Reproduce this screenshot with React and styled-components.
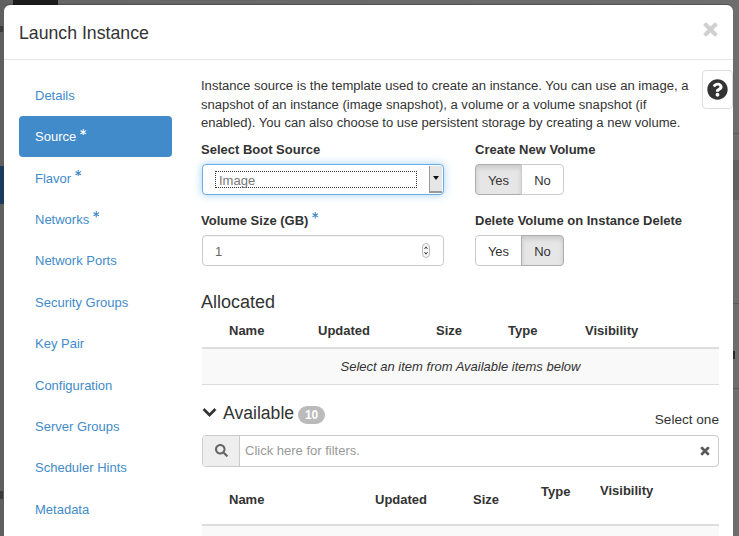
import React from "react";
import styled, { createGlobalStyle } from "styled-components";
import { FaTimes, FaQuestionCircle, FaSearch, FaChevronDown, FaAsterisk } from "react-icons/fa";

const Global = createGlobalStyle`
  html, body { margin: 0; padding: 0; background: #666; }
  * { box-sizing: border-box; }
  #root { height: 536px; overflow: hidden; }
`;

const Backdrop = styled.div`
  position: relative;
  height: 536px;
  overflow: hidden;
  padding: 5px 6px 0 4px;
  background: linear-gradient(90deg, #5f5f5f 0, #666 20px, #6e6e6e 100%);
  font-family: "Liberation Sans", Arial, sans-serif;
  font-size: 13px;
  color: #333;
`;

const BackBlock = styled.div`
  position: absolute;
  left: ${p => p.$x}px;
  top: ${p => p.$y}px;
  width: ${p => p.$w}px;
  height: ${p => p.$h}px;
  background: ${p => p.$c};
`;

const Modal = styled.div`
  position: relative;
  height: 560px;
  background: #fff;
  border-radius: 6px 6px 0 0;
  box-shadow: 0 -1px 1px rgba(0, 0, 0, .25);
`;

const Header = styled.header`
  height: 55px;
  padding: 0 15px;
  display: flex;
  align-items: center;
  justify-content: space-between;
  border-bottom: 1px solid #e5e5e5;
`;

const Title = styled.h4`
  margin: 2px 0 0;
  font-size: 17.7px;
  font-weight: 400;
  color: #333;
`;

const Close = styled.span`
  display: flex;
  margin: 0 -2px 6px 0;
  color: #cfcfcf;
  font-size: 19px;
  & svg { stroke: #cfcfcf; stroke-width: 24px; }
`;

const Body = styled.div`
  display: grid;
  grid-template-columns: 153px 518px;
  column-gap: 29px;
  padding-left: 15px;
`;

const Nav = styled.nav`
  display: flex;
  flex-direction: column;
  gap: 0.38px;
  padding-top: 14.9px;
`;

const NavItem = styled.div`
  height: 41px;
  padding: 0 16px;
  display: flex;
  align-items: center;
  border-radius: 4px;
  color: ${p => (p.$active ? "#fff" : "#428bca")};
  background: ${p => (p.$active ? "#428bca" : "transparent")};
`;

const Star = styled.span`
  display: inline-flex;
  margin: -10px 0 0 4px;
  font-size: 6.5px;
  color: ${p => (p.$light ? "#fff" : "#428bca")};
`;

const Content = styled.main`
  padding-top: 17px;
`;

const Intro = styled.p`
  margin: 0;
  line-height: 18.5px;
  color: #333;
  font-size: 13.05px;
`;

const FormGrid = styled.div`
  display: grid;
  grid-template-columns: 244px 244px;
  column-gap: 30px;
  margin-top: 8px;
`;

const Field = styled.div`
  height: 71px;
`;

const Label = styled.label`
  display: flex;
  align-items: center;
  height: 18px;
  margin: 0 0 5px;
  font-weight: 700;
  color: #333;
  font-size: 13px;
`;

const SelectBox = styled.div`
  display: flex;
  height: 31px;
  width: 242px;
  margin-left: 1px;
  padding: 1px;
  border: 1px solid #66afe9;
  border-radius: 4px;
  box-shadow: 0 0 8px rgba(102, 175, 233, .6);
  background: #fff;
`;

const SelectText = styled.div`
  flex: 1;
  margin: 5px 12px 5px 11px;
  padding: 2px 0 0 3px;
  border: 1px dotted #333;
  display: flex;
  align-items: center;
  color: #777;
  font-size: 13px;
  line-height: 1;
`;

const SelectArrow = styled.div`
  width: 13px;
  display: flex;
  align-items: center;
  justify-content: center;
  background: #e6e6e6;
  border-left: 1px solid #999;
  border-bottom: 2px solid #999;
  &::after {
    content: "";
    border-left: 3px solid transparent;
    border-right: 3px solid transparent;
    border-top: 4px solid #111;
  }
`;

const NumberBox = styled.div`
  display: flex;
  align-items: center;
  justify-content: space-between;
  height: 31px;
  width: 242px;
  margin-left: 1px;
  padding: 2px 14px 0 12px;
  border: 1px solid #ccc;
  border-radius: 4px;
  color: #666;
  box-shadow: inset 0 1px 1px rgba(0, 0, 0, .05);
`;

const Toggle = styled.div`
  display: inline-flex;
  height: 31px;
`;

const ToggleBtn = styled.div`
  width: ${p => p.$w}px;
  display: flex;
  align-items: center;
  justify-content: center;
  padding-top: 2px;
  border: 1px solid #ccc;
  color: #333;
  background: ${p => (p.$on ? "#e6e6e6" : "#fff")};
  border-color: ${p => (p.$on ? "#adadad" : "#ccc")};
  box-shadow: ${p => (p.$on ? "inset 0 3px 5px rgba(0,0,0,.125)" : "none")};
  &:first-child { border-radius: 4px 0 0 4px; }
  &:last-child { border-radius: 0 4px 4px 0; margin-left: -1px; }
`;

const SectionTitle = styled.h4`
  margin: 0;
  font-size: 17.6px;
  font-weight: 400;
  line-height: 20px;
  color: #333;
`;

const AllocatedTitle = styled(SectionTitle)`
  margin-top: 9px;
  font-size: 18px;
`;

const HeadRow = styled.div`
  display: grid;
  grid-template-columns: ${p => p.$cols};
  height: ${p => p.$h}px;
  margin-left: 1px;
  padding-left: 27px;
  border-bottom: 2px solid #ddd;
  font-weight: 700;
  color: #333;
`;

const HeadCell = styled.div`
  padding-top: ${p => p.$top}px;
  line-height: 16px;
  font-size: 13px;
`;

const EmptyRow = styled.div`
  height: 36px;
  margin-left: 1px;
  display: flex;
  align-items: center;
  justify-content: center;
  background: #f9f9f9;
  border-bottom: 1px solid #ddd;
  font-style: italic;
  color: #333;
  font-size: 13px;
`;

const AvailableBar = styled.div`
  display: flex;
  align-items: flex-start;
  justify-content: space-between;
  height: 32px;
  margin-top: 18px;
`;

const AvailableHead = styled.div`
  display: flex;
  align-items: center;
  height: 20px;
  padding-left: 1px;
`;

const Chevron = styled.span`
  display: inline-flex;
  margin-right: 6px;
  font-size: 15px;
  color: #333;
  & svg { stroke: #333; stroke-width: 20px; }
`;

const Badge = styled.span`
  margin: 4px 0 0 4px;
  width: 27px;
  height: 18px;
  border-radius: 9px;
  background: #bbb;
  color: #fff;
  font-size: 12px;
  font-weight: 700;
  display: flex;
  align-items: center;
  justify-content: center;
`;

const SelectOne = styled.span`
  margin-top: 9px;
  line-height: 16px;
  font-size: 13.6px;
`;

const Search = styled.div`
  display: flex;
  height: 32px;
  margin-left: 1px;
  border: 1px solid #ccc;
  border-radius: 4px;
  overflow: hidden;
`;

const SearchAddon = styled.div`
  width: 37px;
  display: flex;
  align-items: center;
  justify-content: center;
  background: #eee;
  border-right: 1px solid #ccc;
  color: #666;
  font-size: 13px;
`;

const SearchText = styled.div`
  flex: 1;
  display: flex;
  align-items: center;
  justify-content: space-between;
  padding: 0 7px 0 5px;
  color: #999;
`;

const ClearIcon = styled.span`
  display: flex;
  color: #555;
  font-size: 12px;
  & svg { stroke: #555; stroke-width: 24px; }
`;

const RestRow = styled.div`
  height: 30px;
  margin-left: 1px;
  background: #f9f9f9;
`;

const HelpBtn = styled.div`
  position: absolute;
  top: 65px;
  right: 0;
  width: 31px;
  height: 39px;
  display: flex;
  align-items: center;
  justify-content: center;
  background: #fff;
  border: 1px solid #ddd;
  border-radius: 4px;
  color: #333;
  font-size: 21px;
`;

const Spinner = () => (
  <svg width="8" height="15" viewBox="0 0 8 15" style={{ marginRight: -1, marginTop: -2 }}>
    <rect x=".5" y=".5" width="7" height="14" rx="3.5" fill="#f6f6f6" stroke="#bbb" />
    <path d="M2.5 6 4 3.8 5.5 6M2.5 9 4 11.2 5.5 9" fill="none" stroke="#444" strokeWidth="1" />
  </svg>
);

const steps = [
  ["Details"], ["Source", true], ["Flavor", true], ["Networks", true], ["Network Ports"],
  ["Security Groups"], ["Key Pair"], ["Configuration"], ["Server Groups"], ["Scheduler Hints"], ["Metadata"],
];

const Head = ({ cols, h, cells }) => (
  <HeadRow $cols={cols} $h={h}>
    {cells.map(([t, top]) => <HeadCell key={t} $top={top}>{t}</HeadCell>)}
  </HeadRow>
);

export default function App() {
  return (
    <Backdrop>
      <Global />
      <BackBlock $x={13} $y={0} $w={45} $h={5} $c="#1c1c1c" />
      <BackBlock $x={0} $y={166} $w={4} $h={38} $c="#1a3c5c" />
      <BackBlock $x={733} $y={160} $w={6} $h={40} $c="#626262" />
      <BackBlock $x={733} $y={133} $w={6} $h={1} $c="#5c5c5c" />
      <BackBlock $x={733} $y={303} $w={6} $h={1} $c="#5c5c5c" />
      <BackBlock $x={733} $y={388} $w={6} $h={1} $c="#5c5c5c" />
      <BackBlock $x={733} $y={351} $w={2} $h={8} $c="#2a2a2a" />
      <BackBlock $x={0} $y={491} $w={3} $h={8} $c="#3a3a3a" />
      <BackBlock $x={0} $y={26} $w={3} $h={6} $c="#3a3a3a" />
      <Modal>
        <Header>
          <Title>Launch Instance</Title>
          <Close><FaTimes /></Close>
        </Header>
        <Body>
          <Nav>
            {steps.map(([name, req]) => (
              <NavItem key={name} $active={name === "Source"}>
                {name}
                {req && <Star $light={name === "Source"}><FaAsterisk /></Star>}
              </NavItem>
            ))}
          </Nav>
          <Content>
            <Intro>
              Instance source is the template used to create an instance. You can use an image, a<br />
              snapshot of an instance (image snapshot), a volume or a volume snapshot (if<br />
              enabled). You can also choose to use persistent storage by creating a new volume.
            </Intro>
            <FormGrid>
              <Field>
                <Label>Select Boot Source</Label>
                <SelectBox>
                  <SelectText>Image</SelectText>
                  <SelectArrow />
                </SelectBox>
              </Field>
              <Field>
                <Label>Create New Volume</Label>
                <Toggle>
                  <ToggleBtn $w={47} $on>Yes</ToggleBtn>
                  <ToggleBtn $w={43}>No</ToggleBtn>
                </Toggle>
              </Field>
              <Field>
                <Label>Volume Size (GB)<Star><FaAsterisk /></Star></Label>
                <NumberBox>1<Spinner /></NumberBox>
              </Field>
              <Field>
                <Label>Delete Volume on Instance Delete</Label>
                <Toggle>
                  <ToggleBtn $w={47}>Yes</ToggleBtn>
                  <ToggleBtn $w={43} $on>No</ToggleBtn>
                </Toggle>
              </Field>
            </FormGrid>
            <AllocatedTitle>Allocated</AllocatedTitle>
            <Head
              cols="89px 118px 72px 77px 1fr"
              h={37}
              cells={[["Name", 11], ["Updated", 11], ["Size", 11], ["Type", 11], ["Visibility", 11]]}
            />
            <EmptyRow>Select an item from Available items below</EmptyRow>
            <AvailableBar>
              <AvailableHead>
                <Chevron><FaChevronDown /></Chevron>
                <SectionTitle>Available</SectionTitle>
                <Badge>10</Badge>
              </AvailableHead>
              <SelectOne>Select one</SelectOne>
            </AvailableBar>
            <Search>
              <SearchAddon><FaSearch /></SearchAddon>
              <SearchText>
                Click here for filters.
                <ClearIcon><FaTimes /></ClearIcon>
              </SearchText>
            </Search>
            <Head
              cols="146px 98px 68px 59px 1fr"
              h={59}
              cells={[["Name", 25], ["Updated", 25], ["Size", 25], ["Type", 17], ["Visibility", 16]]}
            />
            <RestRow />
          </Content>
        </Body>
        <HelpBtn><FaQuestionCircle /></HelpBtn>
      </Modal>
    </Backdrop>
  );
}
